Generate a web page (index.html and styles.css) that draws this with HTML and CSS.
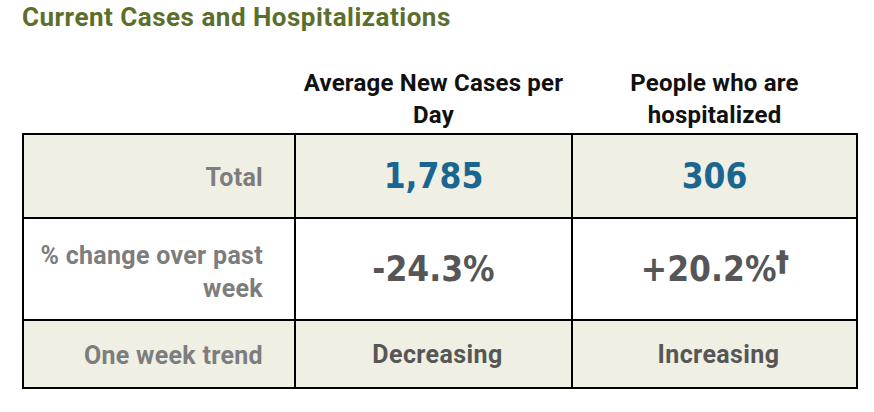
FILE: index.html
```html
<!DOCTYPE html>
<html lang="en">
<head>
<meta charset="utf-8">
<title>Current Cases and Hospitalizations</title>
<link rel="stylesheet" href="styles.css">
</head>
<body>
<main class="page">
  <h2 class="title">Current Cases and Hospitalizations</h2>
  <table class="stats">
    <colgroup>
      <col class="c-label">
      <col class="c-cases">
      <col class="c-hosp">
    </colgroup>
    <thead>
      <tr>
        <th class="head-empty"></th>
        <th class="head">Average New Cases per Day</th>
        <th class="head">People who are hospitalized</th>
      </tr>
    </thead>
    <tbody>
      <tr class="row-total">
        <th class="label">Total</th>
        <td class="num num-blue">1,785</td>
        <td class="num num-blue">306</td>
      </tr>
      <tr class="row-change">
        <th class="label label-two">% change over past<br>week</th>
        <td class="num num-gray">-24.3%</td>
        <td class="num num-gray">+20.2%<span class="dagger">†</span></td>
      </tr>
      <tr class="row-trend">
        <th class="label">One week trend</th>
        <td class="trend">Decreasing</td>
        <td class="trend">Increasing</td>
      </tr>
    </tbody>
  </table>
</main>
</body>
</html>
```

FILE: styles.css
```css
html, body {
  margin: 0;
  padding: 0;
  background: #ffffff;
}

body {
  font-family: Roboto, "Liberation Sans", Arial, sans-serif;
}

.page {
  padding: 2px 0 0 22px;
}

.title {
  margin: 0;
  font-size: 26px;
  line-height: 30px;
  font-weight: 700;
  color: #5b6f2d;
  letter-spacing: 0.5px;
}

.stats {
  margin-top: 35px;
  border-collapse: collapse;
  table-layout: fixed;
  width: 834px;
}

.c-label { width: 272px; }
.c-cases { width: 277px; }
.c-hosp { width: 285px; }

.head,
.head-empty {
  padding: 0 4px 2px;
  vertical-align: bottom;
  text-align: center;
  font-size: 24px;
  line-height: 32px;
  font-weight: 700;
  color: #111111;
  letter-spacing: 0.2px;
  border: none;
}

.stats tbody th,
.stats tbody td {
  border: 2px solid #000000;
  vertical-align: middle;
}

.row-total,
.row-trend {
  background: #f0efe4;
}

.row-change {
  background: #ffffff;
}

.row-total { height: 84px; }
.row-change { height: 102px; }
.row-trend { height: 68px; }

.label {
  text-align: right;
  padding: 3px 31px 0 8px;
  font-size: 25px;
  line-height: 34px;
  font-weight: 700;
  color: #7d7d7d;
  letter-spacing: 0.3px;
}

.label-two {
  padding-top: 6px;
  line-height: 33px;
}

.num {
  text-align: center;
  font-family: "DejaVu Sans Condensed", "DejaVu Sans", sans-serif;
  font-stretch: condensed;
  font-weight: 700;
  font-size: 35px;
  line-height: 40px;
}

.num-blue { color: #1a6690; }
.num-gray { color: #565656; }

.dagger {
  font-family: "DejaVu Sans", sans-serif;
  font-weight: 700;
  font-size: 26px;
  vertical-align: 10px;
  line-height: 0;
  -webkit-text-stroke: 1.5px currentColor;
}

.trend {
  text-align: center;
  padding-left: 9px;
  font-size: 25px;
  font-weight: 700;
  color: #565656;
  letter-spacing: 0.4px;
}
```
